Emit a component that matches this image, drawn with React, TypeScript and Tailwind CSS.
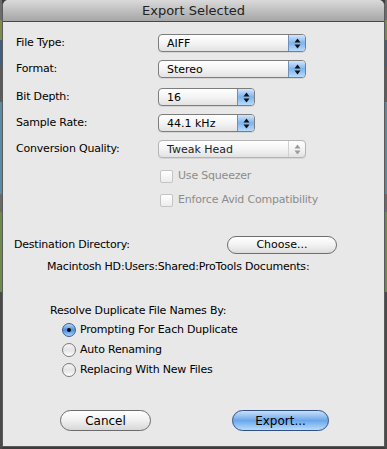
import React from 'react';

const font = { fontFamily: '"DejaVu Sans", "Liberation Sans", sans-serif' };

function Arrows({ disabled }: { disabled?: boolean }) {
  const fill = disabled ? '#9a9a9a' : '#111';
  return (
    <svg width="7" height="11" viewBox="0 0 7 11">
      <path d="M3.5 0.5 L6.5 4.5 L0.5 4.5 Z" fill={fill} />
      <path d="M0.5 6.5 L6.5 6.5 L3.5 10.5 Z" fill={fill} />
    </svg>
  );
}

function Popup({ value, width, disabled }: { value: string; width: string; disabled?: boolean }) {
  return (
    <div
      className={`${width} h-[18px] flex rounded-[4px] border overflow-hidden ${
        disabled ? 'border-[#b4b4b4] text-[#222]' : 'border-[#7d7d7d] text-black'
      } bg-gradient-to-b from-white via-[#f4f4f4] to-[#e2e2e2] shadow-[0_1px_0_rgba(0,0,0,0.08)]`}
    >
      <div className="flex-1 flex items-center pl-[8px] text-[11px] leading-none">{value}</div>
      {disabled ? (
        <div className="w-[17px] flex items-center justify-center border-l border-[#d0d0d0]">
          <Arrows disabled />
        </div>
      ) : (
        <div className="w-[17px] flex items-center justify-center border-l border-[#6f8fb8] bg-gradient-to-b from-[#d3e6fb] via-[#7eb3ee] to-[#b9dcfb]">
          <Arrows />
        </div>
      )}
    </div>
  );
}

function Row({ label, children, mt }: { label: string; children: React.ReactNode; mt: string }) {
  return (
    <div className={`flex items-center h-[18px] ${mt}`}>
      <div className="w-[142px] text-[11px] text-black tracking-[-0.2px]">{label}</div>
      {children}
    </div>
  );
}

function Checkbox({ label, mt }: { label: string; mt: string }) {
  return (
    <div className={`flex items-center h-[14px] pl-[142px] ${mt}`}>
      <div className="w-[13px] h-[13px] ml-[2px] rounded-[2px] border border-[#c4c4c4] bg-gradient-to-b from-white to-[#ececec]" />
      <span className="ml-[5px] text-[11px] text-[#8c8c8c] tracking-[-0.2px]">{label}</span>
    </div>
  );
}

function Radio({ label, checked, mt }: { label: string; checked?: boolean; mt: string }) {
  return (
    <div className={`flex items-center h-[14px] ${mt}`}>
      {checked ? (
        <div className="w-[14px] h-[14px] rounded-full border border-[#3d5f93] bg-gradient-to-b from-[#b9d7f6] via-[#4a8fe0] to-[#a9d2fa] flex items-center justify-center">
          <div className="w-[4px] h-[4px] rounded-full bg-black" />
        </div>
      ) : (
        <div className="w-[14px] h-[14px] rounded-full border border-[#7a7a7a] bg-gradient-to-b from-[#f4f4f4] via-[#e4e4e4] to-white" />
      )}
      <span className="ml-[4px] text-[11px] text-black tracking-[-0.2px]">{label}</span>
    </div>
  );
}

function Backdrop() {
  return (
    <div className="w-[2px] h-full flex flex-col">
      <div className="h-[20px] bg-[#6c6c6c]" />
      <div className="h-[20px] bg-[#7d8b4c]" />
      <div className="h-[26px] bg-[#41607e]" />
      <div className="h-[36px] bg-[#5c5c5c]" />
      <div className="h-[92px] bg-[#5d8ba2]" />
      <div className="h-[18px] bg-[#6a6a6a]" />
      <div className="h-[80px] bg-[#6c8a4c]" />
      <div className="flex-1 bg-[#4a4a4a]" />
    </div>
  );
}

export default function App() {
  return (
    <div className="w-[387px] h-[449px] flex bg-[#3c3c3c] overflow-hidden" style={font}>
      <Backdrop />
      <div className="w-[383px] h-[447px] flex flex-col border-x border-b border-[#5a5a5a] rounded-t-[6px] overflow-hidden bg-[#e8e8e8]">
        <div className="h-[22px] flex items-center justify-center bg-gradient-to-b from-[#dadada] to-[#a6a6a6] border-b border-[#474747] text-[13px] text-[#222]">
          Export Selected
        </div>
        <div className="flex-1 flex flex-col pl-[13px]">
          <Row label="File Type:" mt="mt-[12px]">
            <Popup value="AIFF" width="w-[148px]" />
          </Row>
          <Row label="Format:" mt="mt-[8px]">
            <Popup value="Stereo" width="w-[148px]" />
          </Row>
          <Row label="Bit Depth:" mt="mt-[10px]">
            <Popup value="16" width="w-[97px]" />
          </Row>
          <Row label="Sample Rate:" mt="mt-[8px]">
            <Popup value="44.1 kHz" width="w-[97px]" />
          </Row>
          <Row label="Conversion Quality:" mt="mt-[8px]">
            <Popup value="Tweak Head" width="w-[148px]" disabled />
          </Row>
          <Checkbox label="Use Squeezer" mt="mt-[11px]" />
          <Checkbox label="Enforce Avid Compatibility" mt="mt-[10px]" />

          <div className="flex items-center h-[18px] mt-[29px]">
            <div className="w-[213px] text-[11px] text-black -ml-[2px] tracking-[-0.2px]">Destination Directory:</div>
            <div className="w-[110px] h-[18px] rounded-full border border-[#6e6e6e] bg-gradient-to-b from-white via-[#f2f2f2] to-[#dcdcdc] flex items-center justify-center text-[11px] text-black">
              Choose...
            </div>
          </div>
          <div className="mt-[5px] pl-[31px] text-[11px] text-black h-[16px] flex items-center tracking-[-0.2px]">
            Macintosh HD:Users:Shared:ProTools Documents:
          </div>

          <div className="mt-[29px] pl-[34px] text-[11px] text-black h-[14px] flex items-center tracking-[-0.2px]">
            Resolve Duplicate File Names By:
          </div>
          <div className="pl-[46px] flex flex-col">
            <Radio label="Prompting For Each Duplicate" checked mt="mt-[5px]" />
            <Radio label="Auto Renaming" mt="mt-[6px]" />
            <Radio label="Replacing With New Files" mt="mt-[6px]" />
          </div>

          <div className="flex mt-[33px] pl-[44px] items-center">
            <div className="w-[91px] h-[21px] rounded-full border border-[#6b6b6b] bg-gradient-to-b from-white via-[#f0f0f0] to-[#d8d8d8] flex items-center justify-center text-[12px] text-black">
              Cancel
            </div>
            <div className="ml-[81px] w-[97px] h-[21px] rounded-full border border-[#2f4f86] bg-gradient-to-b from-[#c9e0f9] via-[#6aa6ea] to-[#b6dcfc] flex items-center justify-center text-[12px] text-black">
              Export...
            </div>
          </div>
        </div>
      </div>
      <Backdrop />
    </div>
  );
}
